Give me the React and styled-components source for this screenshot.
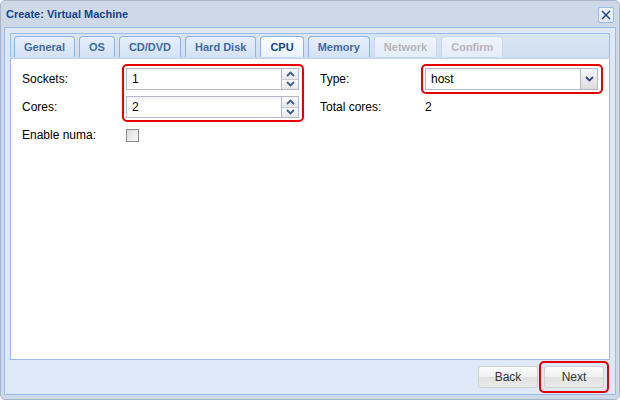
import React from 'react';
import styled, { createGlobalStyle } from 'styled-components';

const Global = createGlobalStyle`
  html, body { margin: 0; padding: 0; background: #fff; }
  body { font-family: "Liberation Sans", Arial, sans-serif; font-size: 12px; color: #000; }
  * { box-sizing: border-box; }
`;

const Win = styled.div`
  width: 620px;
  height: 400px;
  display: flex;
  flex-direction: column;
  background: #ced9e7;
  border: 1px solid #a6b6c9;
  border-radius: 5px;
  padding: 0 3px 4px;
`;

const Header = styled.div`
  height: 26px;
  display: flex;
  align-items: center;
  justify-content: space-between;
  padding: 0 2px;
`;

const Title = styled.span`
  font-size: 11px;
  font-weight: bold;
  color: #15428b;
`;

const CloseBtn = styled.div`
  width: 16px;
  height: 16px;
  margin-top: 2px;
  border: 1px solid #99bbe8;
  border-radius: 2px;
  background: linear-gradient(#f4f8fd, #e1eaf6);
  display: flex;
  align-items: center;
  justify-content: center;
`;

const Frame = styled.div`
  flex: 1;
  display: flex;
  flex-direction: column;
  background: #dfe8f6;
  border: 1px solid #99bbe8;
  padding: 5px 5px 0;
`;

const TabPanel = styled.div`
  flex: 1;
  display: flex;
  flex-direction: column;
`;

const TabStrip = styled.div`
  height: 24px;
  display: flex;
  align-items: flex-end;
  gap: 4px;
  padding: 0 3px;
  border: 1px solid #99bbe8;
  border-bottom: none;
  background: linear-gradient(#dae6f5, #d0def0);
`;

const Tab = styled.div`
  height: 21px;
  padding: 0 9px 1px;
  display: flex;
  align-items: center;
  font-size: 11px;
  font-weight: bold;
  border: 1px solid ${p => (p.$disabled ? '#c9d9ee' : '#8db2e3')};
  border-bottom: none;
  border-radius: 4px 4px 0 0;
  color: ${p => (p.$active ? '#15428b' : p.$disabled ? '#b9b4b8' : '#416aa3')};
  background: ${p =>
    p.$active
      ? 'linear-gradient(#fbfdff, #eaf2fc)'
      : p.$disabled
      ? 'linear-gradient(#eef4fb, #e4edf9)'
      : 'linear-gradient(#e6f0fc, #d3e2f5)'};
`;

const Body = styled.div`
  flex: 1;
  background: #fff;
  border: 1px solid #99bbe8;
  border-top: 2px solid #c5d8f1;
  padding: 9px 11px;
  display: flex;
  gap: 21px;
`;

const FormGrid = styled.div`
  display: grid;
  grid-template-columns: ${p => p.$label}px 173px;
  grid-auto-rows: 22px;
  row-gap: 6px;
  align-items: center;
`;

const Label = styled.div`
  grid-column: 1;
  grid-row: ${p => p.$row || 'auto'};
  font-size: 12px;
  color: #000;
`;

const Value = styled.div`
  grid-column: 2;
  font-size: 12px;
`;

const Highlight = styled.div`
  grid-column: 2;
  grid-row: ${p => p.$rows};
  align-self: stretch;
  margin: -4px -5px -4px -4px;
  border: 2px solid #e60000;
  border-radius: 5px;
  pointer-events: none;
  z-index: 1;
`;

const Field = styled.div`
  grid-column: 2;
  grid-row: ${p => p.$row};
  height: 22px;
  display: flex;
  border: 1px solid #b5b8c8;
  background: #fff;
`;

const Input = styled.div`
  flex: 1;
  padding-left: 5px;
  display: flex;
  align-items: center;
  font-size: 12px;
  background: linear-gradient(#f3f3f3, #fff 4px);
`;

const Spin = styled.div`
  width: 17px;
  display: flex;
  flex-direction: column;
  border-left: 1px solid #b5b8c8;
`;

const SpinHalf = styled.div`
  flex: 1;
  display: flex;
  align-items: center;
  justify-content: center;
  background: linear-gradient(#fbfbfb, #e7e7e7);
  & + & { border-top: 1px solid #c8cbd6; }
`;

const ComboTrigger = styled.div`
  width: 17px;
  display: flex;
  align-items: center;
  justify-content: center;
  border-left: 1px solid #b5b8c8;
  background: linear-gradient(#f7f7f7, #dcdcdc);
`;

const Check = styled.div`
  grid-column: 2;
  width: 13px;
  height: 13px;
  border: 1px solid #8a8a8a;
  background: linear-gradient(135deg, #dcdcdc, #fbfbfb);
`;

const ButtonBar = styled.div`
  height: 34px;
  display: flex;
  align-items: center;
  justify-content: flex-end;
  gap: 6px;
  padding-right: 6px;
`;

const BtnWrap = styled.div`
  display: flex;
  padding: ${p => (p.$marked ? '3px' : '0')};
  margin: ${p => (p.$marked ? '-5px' : '0')};
  border: ${p => (p.$marked ? '2px solid #e60000' : 'none')};
  border-radius: 5px;
`;

const Button = styled.div`
  width: 60px;
  height: 22px;
  display: flex;
  align-items: center;
  justify-content: center;
  font-size: 12px;
  color: #333;
  border: 1px solid #d0d0d0;
  border-radius: 3px;
  background: linear-gradient(#fdfdfd, #f1f1f1 50%, #e1e1e1 51%, #ebebeb);
`;

const Chevron = ({ up, color = '#3e5f93' }) => (
  <svg width="9" height="6" viewBox="0 0 9 6">
    <path
      d={up ? 'M1 5 L4.5 1.5 L8 5' : 'M1 1 L4.5 4.5 L8 1'}
      fill="none"
      stroke={color}
      strokeWidth="1.8"
    />
  </svg>
);

const tabs = [
  { t: 'General' },
  { t: 'OS' },
  { t: 'CD/DVD' },
  { t: 'Hard Disk' },
  { t: 'CPU', active: true },
  { t: 'Memory' },
  { t: 'Network', disabled: true },
  { t: 'Confirm', disabled: true },
];

const Spinner = ({ row, value }) => (
  <Field $row={row}>
    <Input>{value}</Input>
    <Spin>
      <SpinHalf><Chevron up /></SpinHalf>
      <SpinHalf><Chevron /></SpinHalf>
    </Spin>
  </Field>
);

export default function App() {
  return (
    <>
      <Global />
      <Win>
        <Header>
          <Title>Create: Virtual Machine</Title>
          <CloseBtn>
            <svg width="10" height="10" viewBox="0 0 10 10">
              <path d="M1 1 L9 9 M9 1 L1 9" stroke="#15428b" strokeWidth="1.4" />
            </svg>
          </CloseBtn>
        </Header>
        <Frame>
          <TabPanel>
            <TabStrip>
              {tabs.map(x => (
                <Tab key={x.t} $active={x.active} $disabled={x.disabled}>{x.t}</Tab>
              ))}
            </TabStrip>
            <Body>
              <FormGrid $label={104}>
                <Label $row={1}>Sockets:</Label>
                <Spinner row={1} value="1" />
                <Label $row={2}>Cores:</Label>
                <Spinner row={2} value="2" />
                <Highlight $rows="1 / span 2" />
                <Label $row={3}>Enable numa:</Label>
                <Check />
              </FormGrid>
              <FormGrid $label={105}>
                <Label $row={1}>Type:</Label>
                <Field $row={1}>
                  <Input>host</Input>
                  <ComboTrigger><Chevron color="#2b4d85" /></ComboTrigger>
                </Field>
                <Highlight $rows="1" />
                <Label $row={2}>Total cores:</Label>
                <Value>2</Value>
              </FormGrid>
            </Body>
          </TabPanel>
          <ButtonBar>
            <Button>Back</Button>
            <BtnWrap $marked>
              <Button>Next</Button>
            </BtnWrap>
          </ButtonBar>
        </Frame>
      </Win>
    </>
  );
}
